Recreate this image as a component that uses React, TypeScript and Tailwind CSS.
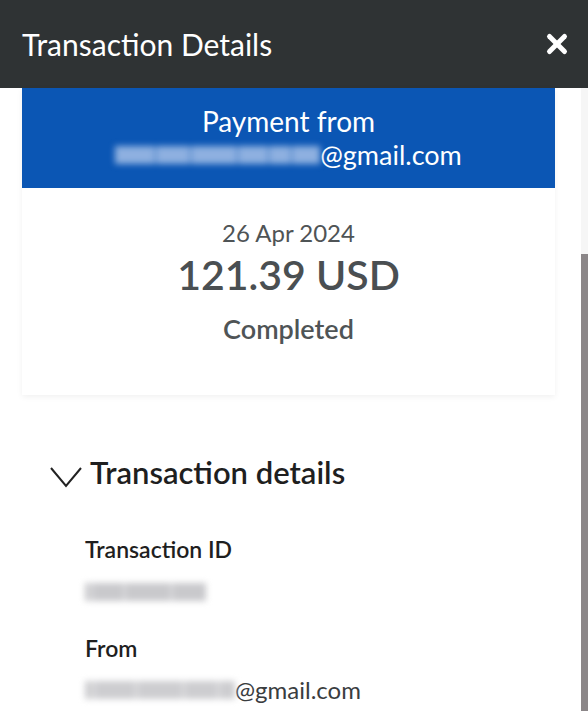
import { X } from "lucide-react";

const font = { fontFamily: "Lato, 'Noto Sans', sans-serif" };

// Smudged placeholder for redacted text
function Redacted({ widths, tone, h = 16 }: { widths: number[]; tone: string; h?: number }) {
  return (
    <span className="inline-flex items-center gap-[1px] blur-[3px] align-middle">
      {widths.map((w, i) => (
        <span key={i} className={tone} style={{ width: w, height: h }} />
      ))}
    </span>
  );
}

export default function App() {
  return (
    <div className="relative h-[711px] w-[588px] overflow-hidden bg-white" style={font}>
      {/* header */}
      <div className="flex h-[88px] items-center justify-between bg-[#2f3334] pl-[22px] pr-[16px]">
        <h1 className="text-[30px] font-normal leading-[40px] text-white">Transaction Details</h1>
        <X size={30} strokeWidth={4} className="text-white" />
      </div>

      {/* scroll track */}
      <div className="absolute right-0 top-[88px] h-[623px] w-[7px] bg-[#f6f6f6]">
        <div className="mt-[166px] h-[460px] w-full bg-[#8b8688]" />
      </div>

      <div className="pr-[33px] pl-[22px]">
        <div className="shadow-[0_2px_6px_rgba(0,0,0,0.06)]">
          <div className="flex h-[100px] flex-col items-center justify-center bg-[#0b56b4] text-white">
            <p className="text-[28px] leading-[34px]">Payment from</p>
            <p className="flex items-center text-[27px] leading-[34px]">
              <Redacted widths={[40, 34, 46, 30, 22, 28]} tone="bg-[#8eb0e0]" h={18} />
              <span>@gmail.com</span>
            </p>
          </div>
          <div className="flex h-[207px] flex-col items-center bg-white pt-[29px]">
            <p className="text-[24px] leading-[32px] text-[#4f5456]">26 Apr 2024</p>
            <p className="mt-[2px] text-[41px] font-semibold leading-[48px] text-[#4a4f52]">121.39 USD</p>
            <p className="mt-[13px] text-[27px] font-semibold leading-[34px] text-[#4f5456]">Completed</p>
          </div>
        </div>

        <div className="pt-[57px] pl-[28px]">
          <div className="flex h-[40px] items-center gap-[8px]">
            <svg width="32" height="22" viewBox="0 0 32 22" className="mt-[10px]">
              <polyline points="1,2 16,20 31,2" fill="none" stroke="#222" strokeWidth="2" />
            </svg>
            <h2 className="text-[31px] font-semibold leading-[40px] text-[#1f1f1f]">Transaction details</h2>
          </div>

          <div className="pl-[35px]">
            <p className="mt-[42px] text-[23px] font-semibold leading-[30px] text-[#1f1f1f]">Transaction ID</p>
            <div className="mt-[18px] flex h-[20px] items-center">
              <Redacted widths={[6, 32, 46, 34]} tone="bg-[#c9c9cc]" h={18} />
            </div>

            <p className="mt-[31px] text-[23px] font-semibold leading-[30px] text-[#1f1f1f]">From</p>
            <p className="mt-[12px] flex h-[30px] items-center text-[24px] text-[#3a3d3f]">
              <Redacted widths={[8, 42, 46, 34, 16]} tone="bg-[#cdcdd0]" h={18} />
              <span>@gmail.com</span>
            </p>
          </div>
        </div>
      </div>
    </div>
  );
}
